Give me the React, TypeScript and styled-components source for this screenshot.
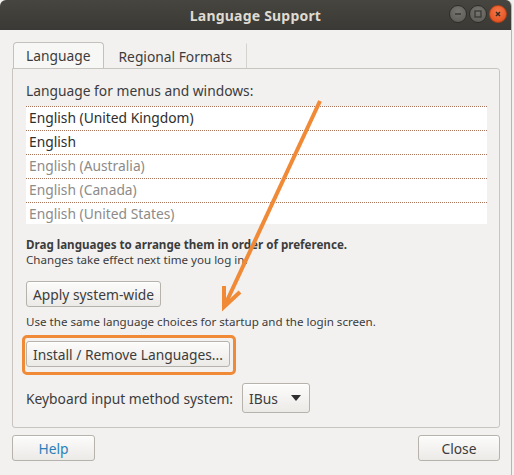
import React from 'react'
import styled, { createGlobalStyle } from 'styled-components'

const Global = createGlobalStyle`
  html, body { margin: 0; padding: 0; background: #f2f1f0; }
  body { font-family: "Noto Sans", "DejaVu Sans", sans-serif; color: #3c3c3c; }
`

const Window = styled.div`
  position: relative;
  width: 511px;
  height: 475px;
  background: #f2f1f0;
  border-right: 1px solid #b9b6b1;
  border-radius: 6px 6px 0 0;
  overflow: hidden;
`

const TitleBar = styled.div`
  height: 30px;
  background: linear-gradient(#46453f, #3a3935);
  display: flex;
  align-items: center;
  justify-content: center;
  position: relative;
`

const Title = styled.div`
  color: #dfdbd2;
  font-weight: bold;
  font-size: 14px;
  letter-spacing: 0.2px;
`

const Controls = styled.div`
  position: absolute;
  right: 4px;
  top: 5px;
  display: flex;
  gap: 2px;
`

const Dot = styled.div<{ close?: boolean }>`
  width: 18px;
  height: 18px;
  border-radius: 50%;
  background: ${p => p.close ? 'radial-gradient(circle at 50% 35%, #f5784a, #df4a17)' : 'radial-gradient(circle at 50% 35%, #77756f, #5a5853)'};
  border: 1px solid ${p => p.close ? '#b5401a' : '#2e2d2a'};
  box-sizing: border-box;
  display: flex;
  align-items: center;
  justify-content: center;
`

const Content = styled.div`
  padding: 12px 11px 0 12px;
`

const Tabs = styled.div`
  display: flex;
  height: 26px;
  align-items: flex-end;
`

const Tab = styled.div<{ active?: boolean }>`
  height: ${p => p.active ? '26px' : '25px'};
  box-sizing: border-box;
  padding: 0 ${p => p.active ? '12px' : '14px'};
  margin-left: ${p => p.active ? '1px' : '0'};
  display: flex;
  align-items: center;
  font-size: 13.8px;
  color: #3c3c3c;
  background: ${p => p.active ? '#f7f7f6' : 'transparent'};
  border: 1px solid ${p => p.active ? '#c4c1bc' : 'transparent'};
  border-bottom: none;
  border-right: 1px solid ${p => p.active ? '#c4c1bc' : '#d6d3cf'};
  border-radius: ${p => p.active ? '4px 4px 0 0' : '0'};
`

const Panel = styled.div`
  width: 488px;
  height: 360px;
  box-sizing: border-box;
  border: 1px solid #c8c5c0;
  border-radius: 0 3px 3px 3px;
  padding: 13px 13px 0 13px;
  display: flex;
  flex-direction: column;
`

const Label = styled.div`
  font-size: 13.8px;
  line-height: 18px;
`

const List = styled.div`
  margin-top: 6px;
  width: 461px;
  height: 118px;
  background: #fff;
  overflow: hidden;
`

const Row = styled.div<{ dim?: boolean }>`
  height: 24px;
  box-sizing: border-box;
  border-top: 1px dotted #a8735a;
  padding: 0 0 2px 3px;
  display: flex;
  align-items: center;
  font-size: 13.8px;
  color: ${p => p.dim ? '#8d8b88' : '#2e2e2e'};
`

const Note = styled.div<{ bold?: boolean }>`
  font-size: 11.6px;
  line-height: 15px;
  font-weight: ${p => p.bold ? 'bold' : 'normal'};
`

const Notes = styled.div`
  margin-top: 13px;
`

const Button = styled.button<{ link?: boolean }>`
  font-family: inherit;
  font-size: 13.8px;
  color: ${p => p.link ? '#2a80b9' : '#3c3c3c'};
  height: 26px;
  padding: 0 6px;
  box-sizing: border-box;
  border: 1px solid #b6b2ac;
  border-radius: 3px;
  background: linear-gradient(#fcfcfb, #eceae7);
  box-shadow: inset 0 1px 0 #fff;
  display: inline-flex;
  align-items: center;
  justify-content: center;
`

const ButtonLine = styled.div<{ gap: number }>`
  margin-top: ${p => p.gap}px;
  display: flex;
`

const Marked = styled.div`
  position: relative;
  display: flex;
  &::after {
    content: '';
    position: absolute;
    left: -4px;
    right: -6px;
    top: -6px;
    bottom: -8px;
    border: 3px solid #f08a36;
    border-radius: 5px;
  }
`

const Hint = styled(Note)`
  margin-top: 7px;
`

const KeyboardRow = styled.div`
  margin-top: 16px;
  display: flex;
  align-items: center;
  gap: 9px;
  font-size: 13.8px;
`

const Combo = styled(Button)`
  height: 30px;
  padding: 0 8px 0 6px;
  gap: 13px;
`

const Caret = styled.span`
  width: 0;
  height: 0;
  border-left: 5px solid transparent;
  border-right: 5px solid transparent;
  border-top: 6px solid #2e2e2e;
`

const Footer = styled.div`
  margin-top: 7px;
  width: 488px;
  display: flex;
  justify-content: space-between;
`

const Pointer = styled.svg`
  position: absolute;
  left: 0;
  top: 0;
  pointer-events: none;
`

const langs = [
  { name: 'English (United Kingdom)' },
  { name: 'English' },
  { name: 'English (Australia)', dim: true },
  { name: 'English (Canada)', dim: true },
  { name: 'English (United States)', dim: true },
]

export default function App() {
  return (
    <>
      <Global />
      <Window>
        <TitleBar>
          <Title>Language Support</Title>
          <Controls>
            <Dot>
              <svg width="10" height="10" viewBox="0 0 10 10"><path d="M2 5h6" stroke="#3a3935" strokeWidth="1.6" /></svg>
            </Dot>
            <Dot>
              <svg width="10" height="10" viewBox="0 0 10 10"><rect x="2" y="2" width="6" height="6" fill="none" stroke="#3a3935" strokeWidth="1.3" /></svg>
            </Dot>
            <Dot close>
              <svg width="10" height="10" viewBox="0 0 10 10"><path d="M3 3l4 4M7 3l-4 4" stroke="#3a2a22" strokeWidth="1.5" /></svg>
            </Dot>
          </Controls>
        </TitleBar>
        <Content>
          <Tabs>
            <Tab active>Language</Tab>
            <Tab>Regional Formats</Tab>
          </Tabs>
          <Panel>
            <Label>Language for menus and windows:</Label>
            <List>
              {langs.map(l => <Row key={l.name} dim={l.dim}>{l.name}</Row>)}
            </List>
            <Notes>
              <Note bold>Drag languages to arrange them in order of preference.</Note>
              <Note>Changes take effect next time you log in.</Note>
            </Notes>
            <ButtonLine gap={14}>
              <Button>Apply system-wide</Button>
            </ButtonLine>
            <Hint>Use the same language choices for startup and the login screen.</Hint>
            <ButtonLine gap={12}>
              <Marked>
                <Button>Install / Remove Languages...</Button>
              </Marked>
            </ButtonLine>
            <KeyboardRow>
              Keyboard input method system:
              <Combo>IBus <Caret /></Combo>
            </KeyboardRow>
          </Panel>
          <Footer>
            <Button link style={{ width: 83 }}>Help</Button>
            <Button style={{ width: 82 }}>Close</Button>
          </Footer>
        </Content>
        <Pointer width="511" height="475">
          <g stroke="#f08a36" strokeWidth="4" fill="none" strokeLinecap="butt">
            <path d="M320 101 L225 305" />
            <path d="M240 292 L224 307 L224 286" />
          </g>
        </Pointer>
      </Window>
    </>
  )
}
